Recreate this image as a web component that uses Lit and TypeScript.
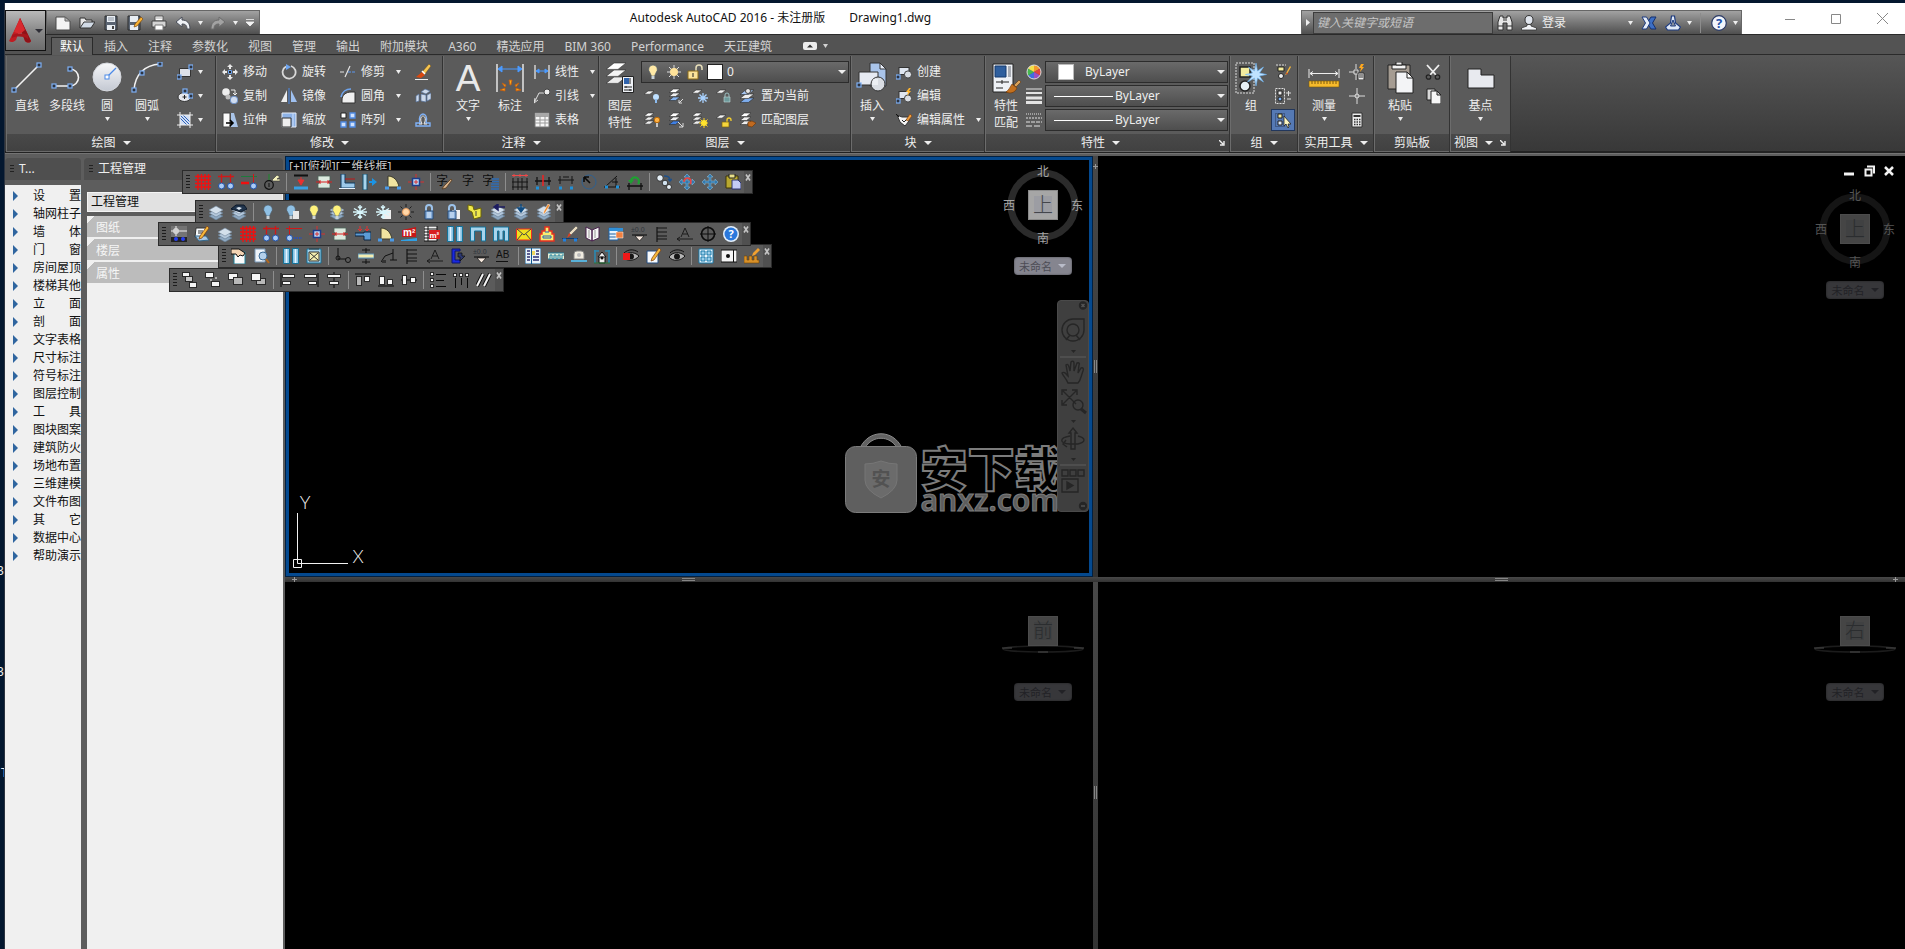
import { LitElement, html, svg, css, nothing, TemplateResult } from "lit";
import { customElement, property } from "lit/decorators.js";

/* ---------- icon library ---------- */

const node = (x: number, y: number) =>
  svg`<rect x=${x - 2} y=${y - 2} width="4" height="4" fill="#2c3340" stroke="#7db0f5" stroke-width="1.2"/>`;
const sheet = (x: number, y: number, w: number, fill: string) =>
  svg`<path d=${`M${x + w * 0.4} ${y}h${w * 0.6}l${-w * 0.4} ${w * 0.32}h${-w * 0.6}z`} fill=${fill} stroke="#2b2b2b" stroke-width=".6"/>`;
const stack = svg`<path d="M1 12l7-3 7 3-7 4z" fill="#8fa9c2" stroke="#5f7890" stroke-width=".6"/><path d="M1 9l7-3 7 3-7 4z" fill="#b4c8dc" stroke="#5f7890" stroke-width=".6"/><path d="M1 6l7-4 7 4-7 4z" fill="#d3e0ec" stroke="#71869c" stroke-width=".6"/>`;
const lens = (x: number, y: number) => svg`<circle cx=${x} cy=${y} r="3" fill="#a9cbf5" stroke="#1f50a8"/>`;
const walls = svg`<path d="M.5.5h6v15h-6zM9.500.5h6v15h-6z" fill="#8cc4e4" stroke="#14739a"/><path d="M3.500 1v14M12.500 1v14" stroke="#e4f4ff" stroke-width="1.500"/>`;
const door = svg`<path d="M3 13V2c6 0 10 5 11 11z" fill="#efe3a0" stroke="#3a3a2c"/><path d="M0 14h4M12 14h4" stroke="#4a9ae8" stroke-width="3"/>`;
const flake = svg`<path d="M8 1v14M2 4.500l12 7M14 4.500l-12 7M6 2.500l2 2 2-2M6 13.500l2-2 2 2M1 8h14" stroke="#d8f6fc" stroke-width="1.400" fill="none"/>`;
const bulb = (c: string) =>
  svg`<path d="M8 1a4.500 4.500 0 0 1 3 7.700L9.500 12h-3L5 8.700A4.500 4.500 0 0 1 8 1z" fill=${c} stroke="#51606d" stroke-width=".6"/><path d="M6.500 12h3v3h-3z" fill="#c9d2d8"/>`;
const paper = svg`<path d="M8 6h8v9H8z" fill="#fff" opacity=".9"/>`;
const lockIce = svg`<path d="M5 8V4a3 3 0 0 1 6 0v4" fill="none" stroke="#9cc2ea" stroke-width="2"/><path d="M4 7h8v8H4z" fill="#87aedb" stroke="#284c78"/><path d="M6 9h4M6 11h4M6 13h4" stroke="#e8f4ff"/>`;
const box = (x: number, y: number, w = 7, h = 4, f = "#f4f4f4") =>
  svg`<rect x=${x + 0.5} y=${y + 0.5} width=${w} height=${h} fill=${f} stroke="#2a2a2a"/>`;
const blockShape = svg`<rect x="3" y="3.500" width="10" height="7" fill="#dfe6f0" stroke="#333"/><circle cx="12" cy="10.500" r="3.600" fill="#d9dde3" stroke="#444"/>`;
const hanzi = (x: number) =>
  svg`<text x=${x} y="11" font-size="12" fill="#0d0d0d" font-family="Noto Sans CJK SC">字</text>`;
const gridRed = svg`<path d="M3 0v16M6.500 0v16M10 0v16M13.500 0v16M0 2.500h16M0 6h16M0 9.500h16M0 13h16" stroke="#f01010" stroke-width="1.400"/>`;
const axisRed = svg`<path d="M0 2.500h16M3.500 0v9M12.500 0v9" stroke="#d01818" stroke-width="1.300"/>${lens(3.5, 12)}${lens(12.5, 12)}`;
const column = svg`<path d="M8 0v16M0 8h16" stroke="#d83030"/><rect x="4.500" y="4.500" width="7" height="7" fill="#b9d4f4" stroke="#1c3d8c" stroke-width="1.500"/><path d="M8 6v4M6 8h4" stroke="#d83030"/>`;
const wallSlice = svg`<path d="M2 2h12v4l-2 2 2 2v4H2v-4l2-2-2-2z" fill="#dceadf" stroke="#4c6658" stroke-width=".8"/><path d="M0 8h16M4 6v4M12 6v4" stroke="#d82020"/>`;
const cross4 = svg`<path d="M8 0l3 3H9v4h4V5l3 3-3 3V9H9v4h2l-3 3-3-3h2V9H3v2L0 8l3-3v2h4V3H5z" fill="#3479ad" stroke="#8cc4e4" stroke-width=".5"/>`;
const levelMark = svg`<text x="0" y="6" font-size="7" fill="#30363c" font-family="Liberation Sans">±0.0</text><path d="M1 9h15" stroke="#0b0b0b"/><path d="M4 10h9l-4.500 5z" fill="#f6e9df" stroke="#111" stroke-width=".7"/>`;
const comb = svg`<path d="M3 1v15M3 2h10M3 6h10M3 10h10M3 13h10" stroke="#141414" fill="none" stroke-width="1.200"/>`;
const compassA = svg`<path d="M0 13h16M0 13l3-2M0 13l3 2M4 11L8 2l4 9M6 8h5" stroke="#1c1c1c" fill="none"/>`;
const eye = svg`<path d="M0 9c3-5 11-6 16-1-4 5-12 6-16 1z" fill="#b4b4b4" stroke="#111"/><circle cx="8" cy="8.500" r="3" fill="#161616"/><path d="M1 5c4-4 10-4 14-1" stroke="#111" fill="none"/>`;
const pencil = svg`<path d="M13 0l2 2-7 10-3 1 1-3z" fill="#f5b73a" stroke="#7a3c10" stroke-width=".7"/>`;

const icons: Record<string, TemplateResult> = {
  /* quick access */
  new: svg`<path d="M1 2h9l5 4v9H1z" fill="#f3f3f3" stroke="#4a4a4a"/><path d="M10 2v4h5z" fill="#b9b9b9" stroke="#666"/>`,
  open: svg`<path d="M1 13V3h5l1 2h6v2" fill="#e8e8e8" stroke="#333"/><path d="M1 13l4-6h11l-4 6z" fill="#d2dbe6" stroke="#333"/>`,
  save: svg`<path d="M2 1h12v14H2z" fill="#5a6472" stroke="#2c2c2c"/><path d="M4 1h8v6H4zM4 10h8v5H4z" fill="#e9eef3"/><path d="M5 3h6M5 5h6" stroke="#8a93a0"/><path d="M9 11h2v3H9z" fill="#444"/>`,
  saveas: svg`<path d="M1 1h12v14H1z" fill="#5a6472" stroke="#2c2c2c"/><path d="M3 1h8v6H3zM3 10h8v5H3z" fill="#e9eef3"/><path d="M14 2l2 2-6 7-3 1 1-3z" fill="#f9b233" stroke="#7c4a10" stroke-width=".7"/>`,
  print: svg`<path d="M4 1h8v5H4z" fill="#fff" stroke="#555"/><path d="M1 6h14v6H1z" fill="#d4d4d4" stroke="#444"/><path d="M4 10h8v5H4z" fill="#fff" stroke="#777"/><path d="M5 3h6" stroke="#aaa"/>`,
  undo: svg`<path d="M7 2v3c5 0 8 3 8 9h-3c0-4-2-5-5-5v3L1 7z" fill="#eef1f6" stroke="#4a4f5a"/>`,
  redo: svg`<path d="M9 2v3c-5 0-8 3-8 9h3c0-4 2-5 5-5v3l6-5z" fill="#a2a2a2" stroke="#6c6c6c"/>`,
  /* info centre */
  find: svg`<path d="M3 1h3v2h4V1h3l2 6v8h-5V8H6v7H1V7z" fill="#e7e7e7" stroke="#333"/><path d="M1 11h5M10 11h5M6 5h4" stroke="#333"/>`,
  user: svg`<path d="M8 .5c3 0 4 2 4 4.500S10.500 9.500 8 9.500 4 7.500 4 5 5 .5 8 .5z" fill="#dfe4ec" stroke="#333"/><path d="M6 9.500h4v1.500l5.500 2v2H.5v-2L6 11z" fill="#f1f3f7" stroke="#333" stroke-width=".8"/>`,
  exchange: svg`<path d="M15 2h-5L6 8l4 6h5l-3.500-6z" fill="#3d6fc4" stroke="#15306e"/><path d="M1 2h4.500L9 8l-3.500 6H1l3.500-6z" fill="#e6edf8" stroke="#1d3b80"/>`,
  a360: svg`<path d="M6.500 1h3l1 7 5 4-2 3h-11l-2-3 5-4z" fill="#dfe8f6" stroke="#1d3b80" stroke-width="1.200"/><path d="M8 5l2.500 6h-5z" fill="#8a8f98" stroke="#1d3b80"/>`,
  help: svg`<circle cx="8" cy="8" r="7.300" fill="#f2f5fb" stroke="#2a3a66" stroke-width="1.200"/><text x="8" y="13" text-anchor="middle" font-size="13" font-weight="700" fill="#2350a8" font-family="Open Sans">?</text>`,
  /* draw */
  line: svg`<path d="M3 28L28 3" stroke="#f2f2f2" stroke-width="1.600"/>${node(3, 28)}${node(28, 3)}`,
  pline: svg`<path d="M3 24h16a8.500 8.500 0 0 0 0-17" fill="none" stroke="#f2f2f2" stroke-width="1.600"/>${node(3, 24)}${node(19, 24)}${node(19, 7)}`,
  circle: svg`<circle cx="16" cy="15" r="14" fill="url(#ball)" stroke="#d5d8de"/><path d="M16 15l9-9" stroke="#4b8ae8" stroke-width="1.300"/><rect x="14" y="13" width="4" height="4" fill="#fff" stroke="#4b8ae8"/>`,
  arc: svg`<path d="M3 28C4 13 13 3 29 2" fill="none" stroke="#f2f2f2" stroke-width="1.600"/>${node(3, 28)}${node(11, 11)}${node(29, 2)}`,
  rect: svg`<path d="M2.500 4.500h11v8h-11z" fill="#dde1e9" stroke="#333"/>${node(14, 3)}${node(2, 13)}`,
  ellipse: svg`<ellipse cx="7.500" cy="9" rx="6.500" ry="4.500" fill="#e5e7ec" stroke="#333"/><path d="M5.500 9h4M7.500 7v4" stroke="#222"/>${node(8, 3)}${node(14, 8)}`,
  hatch: svg`<path d="M3 3h10v10H3z" fill="#cfdcf2"/><path d="M3 6l7 7M3 3l10 10M6 3l7 7" stroke="#2d62b8"/><path d="M0 3h16M0 13h16M3 0v16M13 0v16" stroke="#f0f0f0"/>`,
  /* modify */
  move: svg`<path d="M8 0l3 3H9v2H7V3H5zM8 16l3-3H9v-2H7v2H5zM0 8l3-3v2h2v2H3v2zM16 8l-3-3v2h-2v2h2v2z" fill="#e9e9e9"/><path d="M6.500 6.500h3v3h-3z" fill="#222" stroke="#6ea5f0"/>`,
  copy: svg`<circle cx="4" cy="4" r="3.800" fill="#eee"/><circle cx="6" cy="9" r="2.500" fill="#bbb"/><circle cx="12" cy="12" r="3.800" fill="#cfdcf0" stroke="#6b8fc6"/><path d="M9 2h4v4M11 5l2 2 2-2" stroke="#eee" fill="none"/>`,
  stretch: svg`<path d="M1 1h7v14H1z" fill="#fafafa" stroke="#444"/><path d="M9 1h3l4 14H9z" fill="#a9c4e8"/><path d="M4 11h7M8 8l3 3-3 3" stroke="#000" fill="none" stroke-width="1.600"/>`,
  rotate: svg`<path d="M10 2a6.500 6.500 0 1 1-5 .5" fill="none" stroke="#d9d9d9" stroke-width="1.800"/><path d="M5 0l5 3-5 3z" fill="#6ea5f0"/>`,
  mirror: svg`<path d="M6 2v12H0z" fill="#efefef"/><path d="M10 2v12h6z" fill="#9fc0ef"/><path d="M8 0v16" stroke="#4b8ae8"/>`,
  scale: svg`<path d="M1 1h14v14H1z" fill="#8db2e6" stroke="#e8eef8"/><path d="M1 6h9v9H1z" fill="#eee" stroke="#333"/><path d="M12 1v14" stroke="#cfe0fa"/>`,
  trim: svg`<path d="M0 8h4M5 13l5-11" stroke="#e4e4e4" stroke-width="1.200"/><path d="M8 8h8" stroke="#5c98ef" stroke-dasharray="3 1"/>`,
  fillet: svg`<path d="M2 15V12C2 7 6 4 11 4h4v11z" fill="#f0f0f0" stroke="#333"/><path d="M1 9C2 4 6 1 11 1" fill="none" stroke="#6ea5f0" stroke-width="1.600"/>`,
  array: svg`<path d="M1 1h5v5H1z" fill="#fff" stroke="#222"/><path d="M10 1h5v5h-5zM1 10h5v5H1zM10 10h5v5h-5z" fill="#cfe0fb" stroke="#4f8ae4" stroke-width="1.300"/>`,
  erase: svg`<path d="M0 15.500h13" stroke="#eee"/><path d="M14 0l2 2-6 8-3-2z" fill="#f6c651" stroke="#6c4816" stroke-width=".5"/><path d="M7 8l3 3-4 3-5-1z" fill="#d9480f"/><path d="M7 7l3 3" stroke="#fff" stroke-width="1.500"/>`,
  explode: svg`<path d="M6 4l4-3 5 2-4 3zM1 8l3-2v7l-3 1zM6 6l5 1v7l-5-1zM12 7l4-2v6l-4 2z" fill="#cdd9ea" stroke="#55719b" stroke-width=".7"/>`,
  offset: svg`<path d="M1 14h14v-3h-4c2-6-1-9-3-9s-5 3-3 9H1z" fill="none" stroke="#7fb1f7" stroke-width="1.400"/><path d="M4 12h3c-3-6 0-8 1-8s4 2 1 8h3" fill="none" stroke="#eee"/>`,
  /* annotate */
  bigA: svg`<text x="16" y="29" text-anchor="middle" font-size="37" fill="#e9e9e9" font-family="Liberation Sans">A</text>`,
  dim: svg`<path d="M3 2v28M29 2v28" stroke="#eee" stroke-width="1.400"/><path d="M4 7h24M4 7l4-3v6zM28 7l-4-3v6z" stroke="#4b9aff" fill="#4b9aff"/><path d="M15 18h3l-1 5h-1zM8 21l4 2-1 2zM25 21l-4 2 1 2zM6 28l5-2v3zM27 28l-5-2v3z" fill="#f7a81c" stroke="#c65a0c" stroke-width=".8"/>`,
  linear: svg`<path d="M1 1v14M15 1v14" stroke="#eee" stroke-width="1.200"/><path d="M2 7h12M2 7l3-2v4zM14 7l-3-2v4z" stroke="#4b9aff" fill="#4b9aff"/>`,
  leader: svg`<path d="M0 15l2-4 3-6h6M0 15l1-5M0 15l4-3" fill="none" stroke="#e0e0e0"/><circle cx="13" cy="4" r="3" fill="#eee" stroke="#444"/>`,
  table: svg`<path d="M1 1h14v14H1z" fill="#f7f7f7" stroke="#777"/><path d="M1 1h14v4H1z" fill="#a8a8a8"/><path d="M1 8h14M1 11h14M6 4v11M11 4v11" stroke="#999"/>`,
  /* layers */
  layerprop: svg`${sheet(2, 15, 20, "#ececec")}${sheet(2, 8, 20, "#f4f4f4")}${sheet(2, 1, 20, "#fff")}<path d="M18.500 14.500h11v16h-11z" fill="#eef1f6" stroke="#222"/><path d="M20 16h5v6h-5z" fill="#2f63ad"/><path d="M26 16v6M20 25h8M20 28h8M22 24v2M26 27v2" stroke="#222"/>`,
  bulb: bulb("#ffe9a6"),
  sun: svg`<path d="M8 1v14M1 8h14M3 3l10 10M13 3L3 13" stroke="#ddd"/><circle cx="8" cy="8" r="4" fill="#ffe39a"/>`,
  unlock: svg`<path d="M9 8V4a3 3 0 0 1 6 0v2" fill="none" stroke="#e8dfba" stroke-width="1.500"/><path d="M1 7h10v8H1z" fill="#fbe39a" stroke="#8b6a18"/><path d="M6 9v4" stroke="#222"/>`,
  l1: svg`${sheet(0, 3, 10, "#f3f3f3")}<circle cx="12" cy="9" r="3" fill="#bfe0ff"/><path d="M12 11v4" stroke="#8dbcf0" stroke-width="2"/>`,
  l2: svg`${sheet(1, 9, 11, "#86b4f0")}${sheet(1, 5, 11, "#eee")}${sheet(1, 1, 11, "#fff")}<path d="M15 11l-4 4M11 12v3h3" stroke="#ddd" fill="none"/>`,
  l3: svg`${sheet(0, 2, 10, "#f3f3f3")}<path d="M11 5v10M6 10h10M7.500 6.500l7 7M14.500 6.500l-7 7" stroke="#a9d2ff" stroke-width="1.300"/>`,
  l4: svg`${sheet(0, 2, 10, "#f3f3f3")}<path d="M9 9V7a2 2 0 0 1 4 0v2" fill="none" stroke="#9bbfc0"/><path d="M8 9h6v5H8z" fill="#6e9b9c" stroke="#bfd6d6" stroke-width=".6"/>`,
  l5: svg`${sheet(0, 10, 14, "#7dacec")}${sheet(0, 6, 14, "#eee")}${sheet(0, 2, 14, "#a9c9f4")}<circle cx="8" cy="3" r="2.500" fill="#e8e8e8" stroke="#444"/>`,
  l6: svg`${sheet(0, 9, 10, "#eee")}${sheet(0, 5, 10, "#eee")}${sheet(0, 1, 10, "#fff")}<circle cx="13" cy="8" r="2.700" fill="#ffb347" stroke="#b96a08"/><path d="M13 11v4" stroke="#e8e8e8" stroke-width="1.500"/>`,
  l7: svg`${sheet(1, 9, 11, "#3f7fe4")}${sheet(1, 5, 11, "#eee")}${sheet(1, 1, 11, "#fff")}<path d="M10 10l5 5M15 11v4h-4" stroke="#ddd" fill="none"/>`,
  l8: svg`${sheet(0, 9, 10, "#eee")}${sheet(0, 5, 10, "#eee")}${sheet(0, 1, 10, "#fff")}<path d="M12 6v10M7 11h10M8.500 7.500l7 7M15.500 7.500l-7 7" stroke="#ffd21f"/><circle cx="12" cy="11" r="3" fill="#ffe32d"/>`,
  l9: svg`${sheet(0, 3, 10, "#f3f3f3")}<path d="M11 10V8a2 2 0 0 1 4 0v1" fill="none" stroke="#f5cf2e" stroke-width="1.300"/><path d="M6 10h7v5H6z" fill="#f5d53c" stroke="#7c6210" stroke-width=".7"/>`,
  l10: svg`${sheet(0, 9, 11, "#eee")}${sheet(0, 5, 11, "#eee")}${sheet(0, 1, 11, "#fff")}<path d="M8 10l4-1 4 2-4 4-4-1z" fill="#c06a20" stroke="#6c3608" stroke-width=".6"/>`,
  /* block */
  insert: svg`<path d="M14 1h10l6 6v17H14z" fill="#a9c4ea" stroke="#333"/><path d="M24 1v6h6z" fill="#e8eefa" stroke="#333"/><path d="M3 10h19v13H3z" fill="#e6eaf2" stroke="#333"/><circle cx="22" cy="22" r="7" fill="#d9dde3" stroke="#333"/><path d="M17 17h5v6h-6z" fill="#f4f6fa" opacity=".7"/>${node(3, 23)}`,
  create: svg`${blockShape}${node(2, 13)}`,
  edit: svg`${blockShape}<path d="M13 0l-3 4h2l-1 4 4-5h-2l2-3z" fill="#ffb52e"/>${node(2, 13)}`,
  attr: svg`<path d="M1 3l5 2h7v4l-4 5-5-4z" fill="#f4f4f4" stroke="#333"/><path d="M6 8l2 2 4-4" stroke="#222" fill="none"/><path d="M14 2l2 2-4 5-2-1z" fill="#f0a040" stroke="#7c3a08" stroke-width=".6"/><path d="M0 2l3 3" stroke="#111"/>`,
  /* properties */
  match: svg`<path d="M3 2h20v28H3z" fill="#eef1f6" stroke="#222"/><path d="M5 4h11v11H5z" fill="#2f5f9e" stroke="#173a6c"/><path d="M18 4h3v11h-3z" fill="#a8acb4"/><path d="M6 20h13M6 26h7M12 18v4" stroke="#222"/><path d="M29 18l2 2-5 5-2-2z" fill="#d8a15a" stroke="#5c3410" stroke-width=".6"/><path d="M22 22l5 4c-2 5-7 6-11 4 3-2 4-5 6-8z" fill="#c3701e" stroke="#6c3608" stroke-width=".6"/>`,
  wheel: svg`<path d="M8 8V1a7 7 0 0 1 6 3.500z" fill="#f39a2c"/><path d="M8 8l6-3.500a7 7 0 0 1 0 7z" fill="#e2443a"/><path d="M8 8l6 3.500A7 7 0 0 1 8 15z" fill="#9a4fc4"/><path d="M8 8v7a7 7 0 0 1-6-3.500z" fill="#3d6fe0"/><path d="M8 8l-6 3.500a7 7 0 0 1 0-7z" fill="#46b84e"/><path d="M8 8L2 4.500A7 7 0 0 1 8 1z" fill="#f2e04a"/><circle cx="8" cy="8" r="7" fill="none" stroke="#ddd"/>`,
  weight: svg`<path d="M0 1h16" stroke="#e4e4e4"/><path d="M0 5h16" stroke="#e4e4e4" stroke-width="2"/><path d="M0 10h16M0 14.500h16" stroke="#e4e4e4" stroke-width="3"/>`,
  ltype: svg`<path d="M0 2h16" stroke="#e4e4e4" stroke-dasharray="1 1"/><path d="M0 6h16" stroke="#e4e4e4" stroke-dasharray="2 1"/><path d="M0 10h16" stroke="#e4e4e4" stroke-dasharray="4 1"/><path d="M0 14h16" stroke="#e4e4e4" stroke-dasharray="6 2"/>`,
  /* group */
  group: svg`<path d="M1 1h18v30H1z" fill="none" stroke="#ddd" stroke-dasharray="2 1"/><path d="M5 5h10v10H5z" fill="#f3ec9e" stroke="#222" stroke-width="1.500"/><circle cx="10" cy="24" r="5" fill="#e6f0f6" stroke="#222" stroke-width="1.500"/><path d="M21 1l1.500 8 6-4-4 6 7 1.500-7 1.500 4 6-6-4-1.500 8-1.500-8-7 4 5-6-7-1.500 7-1.500-4-6 6 4z" fill="#bfe2ff" stroke="#6cb4f4" stroke-width=".6"/>`,
  ungroup: svg`<path d="M1 1h10" stroke="#ddd" stroke-dasharray="2 1"/><path d="M3 3h6v4H3z" fill="#f3ec9e" stroke="#222"/><circle cx="6" cy="12" r="2.500" fill="#eee" stroke="#222"/><path d="M15 2l1 1-4 7-2 1z" fill="#f5b73a"/><path d="M11 9l2 1" stroke="#d23c1c"/>`,
  groupedit: svg`<path d="M.5.5h9v15h-9z" fill="none" stroke="#ddd" stroke-dasharray="2 1"/><path d="M3 3h4v4H3z" fill="#eee" stroke="#222"/><circle cx="5" cy="11" r="2" fill="#7fb0f0" stroke="#222"/><path d="M11 5h5M13.500 3v5M12 11h4" stroke="#ddd"/>`,
  groupsel: svg`<path d="M.5 1.500h9v13h-9z" fill="none" stroke="#2c3c58" stroke-dasharray="1 1"/><path d="M3 2h4v4H3z" fill="#f3ec9e" stroke="#222"/><path d="M3 9h4v4H3z" fill="#dce8f4" stroke="#222"/><path d="M9 4v10l2-2 2 4 1-1-1-3h3z" fill="#fbf6c0" stroke="#222" stroke-width=".8"/>`,
  /* utilities */
  measure: svg`<path d="M1 7v9M31 7v9M2 11.500h28M2 11.500l3-2M2 11.500l3 2M30 11.500l-3-2M30 11.500l-3 2" stroke="#eee" fill="none"/><path d="M1 19h30v6H1z" fill="#f7bb2c" stroke="#7c5a0c" stroke-width=".6"/><path d="M4 19v3M7 19v3M10 19v3M13 19v3M16 19v3M19 19v3M22 19v3M25 19v3M28 19v3" stroke="#7c5a0c"/>`,
  quick: svg`<path d="M0 8h5M7 0v5M7 10v6" stroke="#ddd"/><path d="M5 6h4v4H5z" fill="none" stroke="#ddd"/><path d="M12 0l-2 4h2l-1 4 4-5h-2l2-3z" fill="#ffa81e"/><path d="M9 9h6v7H9z" fill="#eee" stroke="#333"/><path d="M10 11h4M10 13h4" stroke="#333"/>`,
  point: svg`<path d="M0 8h16M8 0v16" stroke="#ddd"/><circle cx="8" cy="8" r="2" fill="#888" stroke="#ddd"/>`,
  calc: svg`<path d="M3 1h10v14H3z" fill="#eee" stroke="#333"/><path d="M4.500 3h7v2h-7z" fill="#333"/><path d="M5 7.500h1.500M7.500 7.500H9M10 7.500h1.500M5 10h1.500M7.500 10H9M10 10h1.500M5 12.500h1.500M7.500 12.500H9M10 12.500h1.500" stroke="#333" stroke-width="1.300"/>`,
  paste: svg`<path d="M4 3h22v24H4z" fill="#a59c92" stroke="#222"/><path d="M8 3h14v4H8z" fill="#f4f4f4" stroke="#222"/><path d="M12 0h6v3h-6z" fill="#eee" stroke="#222"/><path d="M12 10h11l6 6v15H12z" fill="#f3f4f6" stroke="#222"/><path d="M23 10v6h6z" fill="#fff" stroke="#222"/>`,
  cut: svg`<path d="M2 1l9 10M14 1L5 11" stroke="#f0f0f0" stroke-width="1.800"/><circle cx="3.500" cy="13" r="2.200" fill="none" stroke="#222" stroke-width="1.300"/><circle cx="12.500" cy="13" r="2.200" fill="none" stroke="#222" stroke-width="1.300"/>`,
  copyclip: svg`<path d="M2 1h8v11H2z" fill="#d9d9d9" stroke="#222"/><path d="M6 3h6l4 4v9H6z" fill="#f5f5f5" stroke="#222"/><path d="M12 3v4h4z" fill="#ccc" stroke="#222"/>`,
  base: svg`<path d="M3 7h13v6h13v13H3z" fill="#e8eaef" stroke="#222"/>`,
  /* floating toolbars */
  grid: gridRed,
  axis: axisRed,
  axis2: svg`<path d="M0 2.500h16" stroke="#1e7a3c"/><path d="M12.500 0v9" stroke="#d01818"/><path d="M0 9h8" stroke="#f01010" stroke-width="2.500"/>${lens(12.5, 12)}`,
  axis3: svg`<path d="M0 2.500h16M3.500 0v9" stroke="#d01818"/>${lens(3.5, 12)}<path d="M8 12h8" stroke="#2050d0" stroke-width="1.500" stroke-dasharray="1.500 1"/>`,
  axisno: svg`<path d="M5 0v7" stroke="#1c8a2c"/><circle cx="5" cy="11" r="4.300" fill="none" stroke="#111" stroke-width="1.200"/><path d="M5 9v4" stroke="#111"/><path d="M8 6l5-5 3 2-3 2h3v2h-7z" fill="#f3efbc" stroke="#333" stroke-width=".6"/>`,
  w1: svg`<path d="M1 1.500h14" stroke="#111" stroke-width="2"/><path d="M1 14h14" stroke="#38a0e4" stroke-width="3"/><path d="M8 3v6M5 6l3 5 3-5z" stroke="#e83030" fill="#e83030"/>`,
  w2: wallSlice,
  w3: svg`<path d="M2 0h4v9h10v5H2z" fill="#9cc8e8" stroke="#103c60"/><path d="M6 5h10" stroke="#c01818"/><path d="M0 14.500h16" stroke="#e8f4ff"/>`,
  w4: svg`<path d="M1 0h4v16H1z" fill="#a8d4ec" stroke="#14506e"/><path d="M7 7h3V4l5 4-5 4V9H7z" fill="#1c94e4"/>`,
  door,
  column,
  t1: svg`${hanzi(-1)}<path d="M15 6l-6 8-4 1 2-3 7-7z" fill="#d9b48c" stroke="#503010" stroke-width=".7"/>`,
  t2: hanzi(2),
  t3: svg`${hanzi(-1)}<path d="M9 5h7M9 7.500h7M8 10h8M8 12.500h8M8 15h8" stroke="#2f6cb4" stroke-width="1.500"/>`,
  d1: svg`<path d="M1 4v12M6 4v12M10 4v12M15 4v12M0 13h16M0 8h16" stroke="#151515"/><path d="M0 1.500h16M2 0v3M8 0v3M14 0v3" stroke="#f04848"/>`,
  d2: svg`<path d="M0 7h16M2 3v8M14 3v8" stroke="#151515" stroke-width="1.300"/><path d="M8 1v11" stroke="#f02020" stroke-width="1.500"/><path d="M1 14h3M12 14h3" stroke="#2090d8" stroke-width="3"/>`,
  d3: svg`<path d="M0 6h16M2 2v8M14 2v8M5 3h6" stroke="#151515"/><path d="M1 14h3M12 14h3" stroke="#2090d8" stroke-width="3"/>`,
  d4: svg`<circle cx="8" cy="8" r="7" fill="none" stroke="#2e6090"/><path d="M9 9L3 3M3 3h5M3 3v5" stroke="#0a0a0a" stroke-width="1.600"/>`,
  d5: svg`<path d="M0 13h16M1 13L13 2M8 8h6M12 4v9" stroke="#111" fill="none"/><path d="M1 13h3M12 13h3" stroke="#2090d8" stroke-width="3"/>`,
  d6: svg`<path d="M0 12h16M2 9v7M14 9v7" stroke="#111" stroke-width="1.300"/><path d="M4 8a4 4 0 1 1 7 2" fill="none" stroke="#1fa032" stroke-width="2.200"/><path d="M1 6h6l-3 4z" fill="#1fa032"/>`,
  c1: svg`<circle cx="4" cy="4" r="3.300" fill="#e4eef6" stroke="#333"/><circle cx="9" cy="9" r="2.800" fill="#cfe0ee" stroke="#333"/><circle cx="13" cy="13" r="2.500" fill="#e4eef6" stroke="#333"/><path d="M8 2c4 0 6 1 6 4M12 5l2 2 2-2" stroke="#1f5088" stroke-width="1.500" fill="none"/>`,
  c2: svg`${cross4}<path d="M5 8a3.500 3.500 0 1 1 6 2" fill="none" stroke="#f04040" stroke-width="1.500"/>`,
  c3: cross4,
  c4: svg`<path d="M1 2h12v12H1z" fill="#b8a830" stroke="#3c3408"/><path d="M4 0h6v4H4z" fill="#e8e08c" stroke="#222"/><path d="M7 6h6l3 3v6H7z" fill="#c4ccf4" stroke="#2c3470"/>`,
  stack,
  stack2: svg`${stack}<path d="M0 5l5-4h8l3 4-6 3z" fill="#20344c" stroke="#0c1828"/><path d="M5 4l3-1 3 1-3 2z" fill="#dfeaf4"/>`,
  b1: bulb("#8fc0e4"),
  b2: svg`${bulb("#8fc0e4")}<path d="M10 7h6v8h-6z" fill="#e8e8e8"/>`,
  b3: bulb("#fff27c"),
  b4: svg`${stack}${bulb("#fff27c")}`,
  f1: flake,
  f2: svg`${paper}${flake}`,
  f3: svg`<circle cx="8" cy="8" r="3.500" fill="#ffd7a8" stroke="#f0a060"/><path d="M8 0v3M8 13v3M0 8h3M13 8h3M2.500 2.500l2 2M11.500 11.500l2 2M13.500 2.500l-2 2M2.500 13.500l2-2" stroke="#1c1c1c"/>`,
  k1: lockIce,
  k2: svg`${paper}${lockIce}`,
  k3: svg`<path d="M1 1l5 1 1 4 7-2v9l-7 2-2-7-4-2z" fill="#efe84c" stroke="#6c6408"/><path d="M9 7v5" stroke="#444"/>`,
  s1: svg`${stack}<path d="M15 3H6M8 0L4 3l4 3z" stroke="#1c1c60" fill="#1c1c60" stroke-width="1.500"/>`,
  s2: svg`${stack}<path d="M8 0v5M5 4l3 4 3-4z" stroke="#124c80" fill="#124c80" stroke-width="1.500"/>`,
  s3: svg`${stack}<path d="M12 0l2 1-5 8-2 1 1-3z" fill="#f08a2c" stroke="#fff" stroke-width=".5"/>`,
  p1: svg`<rect width="16" height="16" fill="#747474"/><path d="M5 0v10M0 5h16M3 3h4v4H3z" stroke="#f0f0f0" fill="none"/><path d="M0 11h16v5H0z" fill="#222"/><circle cx="5" cy="13" r="2" fill="#2840f0"/><circle cx="12" cy="13" r="2" fill="#2840f0"/>`,
  p2: svg`<path d="M2 2h10l-2 9H1z" fill="#f4f8fa" stroke="#333"/><path d="M1 10l4 5 10-1-3-4z" fill="#a9c8e4" stroke="#35688c"/><path d="M4 5h5M4 7h5" stroke="#333"/>${pencil}`,
  r1: svg`<path d="M0 7h9v-1h7v8H9v-4H0z" fill="#5c9cd4" stroke="#0c2440"/><path d="M5 0v4M12 0v4M3 3l2 2 2-2M10 3l2 2 2-2" stroke="#e83030" fill="none"/>`,
  r2: svg`<path d="M1 4l14-3v10H1z" fill="#c81818"/><path d="M0 14l16-2v3H0z" fill="#30a0e4"/><text x="2" y="10" font-size="10" font-weight="700" fill="#fff" font-family="Liberation Sans">m²</text>`,
  r3: svg`<path d="M0 0h13v15H0z" fill="#f4f4f4" stroke="#111"/><path d="M0 3h13M0 6h13M0 9h13M0 12h13M4 0v15" stroke="#111"/><path d="M5 4h11v9H5z" fill="#d82020"/><text x="5.500" y="11.500" font-size="8" font-weight="700" fill="#fff" font-family="Liberation Sans">m²</text>`,
  walls,
  g1: svg`<path d="M.5 1h15v14h-4V5h-7v10h-4z" fill="#a8d4ec" stroke="#14739a"/>`,
  g2: svg`<path d="M.5 1h15v14h-4V5H10v9H6V5H4.500v10h-4z" fill="#a8d4ec" stroke="#14739a"/>`,
  m1: svg`<path d="M.5 3h15v11H.5z" fill="#f0e020" stroke="#f03020"/><path d="M1 3l7 6 7-6M1 14l5-6M15 14l-5-6" stroke="#444" fill="none"/>`,
  m2: svg`<path d="M6 1h4v4h3v3h2v7H1V8h2V5h3z" fill="#f8ec70" stroke="#e83020" stroke-width="1.400"/><path d="M4 10h8v2H4zM6 6h4" fill="none" stroke="#2060b8"/>`,
  m3: svg`<path d="M14 0l2 2-7 7-2-2z" fill="#e8dcc0" stroke="#555" stroke-width=".6"/><path d="M7 7l2 2-4 3z" fill="#e04020"/><path d="M0 12.500h16" stroke="#123c70"/><path d="M1 14h3M12 14h3" stroke="#2080e0" stroke-width="3"/>`,
  m4: svg`<path d="M1 1l6 3v11l-6-3zM14 1L7 4v11l7-3z" fill="#f7f7f7" stroke="#48204c"/><path d="M10 4v8M4 4v8" stroke="#999"/>`,
  m5: svg`<path d="M1 2h9v12H1z" fill="#e8f4fc" stroke="#2060a0"/><path d="M1 2h14v3H1z" fill="#3090d8"/><path d="M1 8h9M1 11h9" stroke="#2060a0"/><path d="M8 6h7v6H8z" fill="#f08040" stroke="#fff" stroke-width=".5"/>`,
  level: levelMark,
  comb,
  compassA,
  north: svg`<circle cx="8" cy="8" r="6.500" fill="none" stroke="#0c0c0c" stroke-width="1.600"/><path d="M0 8h16M8 0v16" stroke="#0c0c0c"/>`,
  ask: svg`<circle cx="8" cy="8" r="8" fill="#e4f0fc"/><circle cx="8" cy="8" r="6.500" fill="#2a78dc"/><text x="8" y="12" text-anchor="middle" font-size="11" font-weight="700" fill="#fff" font-family="Open Sans">?</text>`,
  h1: svg`<path d="M3 4h11v12H3z" fill="#fbfbfb" stroke="#208098"/><path d="M0 1h8l6 4-2 3-3-1-2 2-2-3H0z" fill="#f3d4b4" stroke="#111"/>`,
  h2: svg`<path d="M1 1h10v13H1z" fill="#eef4fa" stroke="#7898b8"/><circle cx="9" cy="8" r="4" fill="#b4d0ea" stroke="#3c6c98"/><path d="M12 11l3 4" stroke="#b06820" stroke-width="2"/>`,
  h3: svg`<path d="M1 1h14v14H1z" fill="#a8d4ec" stroke="#14739a"/><path d="M3 4h10v9H3z" fill="#f3eeb0" stroke="#333"/><path d="M4 5l8 7M12 5l-8 7M3 1h10" stroke="#333"/>`,
  e1: svg`<path d="M3 0v11h8" stroke="#111" fill="none"/><circle cx="3" cy="10" r="2" fill="none" stroke="#111"/><circle cx="13" cy="12" r="2.500" fill="none" stroke="#111"/>`,
  e2: svg`<path d="M0 6h16v4H0z" fill="#f3ecb0" stroke="#5c98c0"/><path d="M8 0v5M8 11v5M4 2h8M4 14h8" stroke="#111" fill="none"/>`,
  e3: svg`<path d="M0 14l4-6 8-3V1M12 5v7M2 13h3M9 12h7" stroke="#111" fill="none"/><path d="M1 12h4v3H1z" fill="#333"/>`,
  e4: svg`<path d="M2 1h8v2H5v9h5v3H2z" fill="#1828e0" stroke="#0c1470"/><path d="M8 5h4v3h3l-5 5V9H8z" fill="#2c3870" stroke="#0a0a0a" stroke-width=".7"/>`,
  ab: svg`<text x="0" y="10" font-size="10" fill="#101010" font-family="Liberation Sans">AB</text><path d="M0 13.500h12" stroke="#111"/>`,
  i1: svg`<path d="M0 0h16v16H0z" fill="#eaf4fa" stroke="#105890"/><path d="M2 3h3M2 6h3M2 9h3M2 12h3M11 3h3M11 6h3M8 9h6M8 12h6" stroke="#2c2c70" stroke-width="1.500"/><path d="M6.500 0v16" stroke="#105890"/><path d="M7 3h3v4H7z" fill="#f0d860"/>`,
  i2: svg`<path d="M0 5h16v6H0z" fill="#e8f0d8"/><path d="M0 5h16M0 11h2V7h2v4h2V7h2v4h2V7h2v4h2V7h2" stroke="#2080a0" fill="none"/>`,
  i3: svg`<path d="M3 11V6a3 3 0 0 1 3-3h4a3 3 0 0 1 3 3v5z" fill="#f0ece0" stroke="#888"/><circle cx="8" cy="7" r="2" fill="#bbb"/><path d="M0 13h16" stroke="#58b0d8" stroke-width="2"/>`,
  i4: svg`<path d="M1 15V2M15 15V2M0 3h5M11 3h5" stroke="#2c88b0" stroke-width="1.600"/><path d="M4 9l4-5 4 5M5 15V9h6v6z" fill="#eee" stroke="#0c0c0c"/><circle cx="8" cy="10" r="1.500" fill="#111"/><path d="M0 15h16" stroke="#287838"/>`,
  eye1: svg`${eye}<path d="M0 5h7v7H0z" fill="#f01818"/>`,
  note: svg`<path d="M1 3h11v12H1z" fill="#f8fafc" stroke="#244c80"/>${pencil}`,
  eye2: eye,
  j1: svg`<path d="M1 1h14v14H1z" fill="#e8f4fc" stroke="#1878a8"/><path d="M3 3h4v4H3zM9 3h4v4H9zM3 9h4v4H3zM9 9h4v4H9z" fill="#9cd0ec" stroke="#1878a8"/>`,
  j2: svg`<path d="M0 2h16v12H0z" fill="#f6f6f6" stroke="#111"/><path d="M12.500 2v12" stroke="#111"/><circle cx="7" cy="8" r="2" fill="#111"/>`,
  j3: svg`<path d="M0 15V8h3v4h2V8h3v4h2V8h3v4h2v3z" fill="#d89028" stroke="#704404" stroke-width=".6"/><path d="M14 0l2 2-5 5-3 1 1-3z" fill="#f0a030"/>`,
  q1: svg`${box(0, 0)}${box(3, 4, 7, 5, "#c8c8c8")}${box(7, 10, 7, 5)}`,
  q2: svg`${box(0, 0, 8, 5)}${box(6, 9, 8, 5)}<path d="M5 8h2M11 5v2" stroke="#fff"/>`,
  q3: svg`${box(0, 1, 9, 6)}${box(5, 5, 9, 7, "#b8b8b8")}`,
  q4: svg`${box(5, 6, 9, 6, "#b8b8b8")}${box(0, 1, 9, 7)}`,
  a1: svg`<path d="M1 1v14" stroke="#0a0a0a"/>${box(2, 2, 12, 3)}${box(2, 9, 8, 3)}`,
  a2: svg`<path d="M15 1v14" stroke="#0a0a0a"/>${box(1, 2, 12, 3)}${box(5, 9, 8, 3)}`,
  a3: svg`<path d="M8 0v16" stroke="#0a0a0a"/>${box(1, 2, 13, 3)}${box(3, 9, 9, 3)}`,
  a4: svg`<path d="M0 2h16" stroke="#0a0a0a"/>${box(1, 4, 5, 9, "#b8b8b8")}${box(9, 4, 5, 5)}`,
  a5: svg`<path d="M0 14h16" stroke="#0a0a0a"/>${box(1, 4, 5, 8)}${box(9, 7, 5, 5)}`,
  a6: svg`<path d="M0 8h16" stroke="#0a0a0a"/>${box(1, 3, 4, 9)}${box(9, 5, 5, 5)}`,
  a7: svg`${box(0, 0, 3, 3)}${box(0, 6, 3, 3)}${box(0, 12, 3, 3)}<path d="M6 2.500h10M6 8.500h8M6 14.500h10" stroke="#0a0a0a"/>`,
  a8: svg`${box(0, 1, 3, 3)}${box(6, 1, 3, 3)}${box(12, 1, 3, 3)}<path d="M2.500 6v10M8.500 6v7M14.500 6v10" stroke="#0a0a0a"/>`,
  a9: svg`<path d="M7 2L1 14M14 2L8 14" stroke="#111" stroke-width="4"/><path d="M7 2L1 14M14 2L8 14" stroke="#f4f4f4" stroke-width="2"/>`,
};

const icon = (name: string, size = 16) => html`<svg
  class="ico"
  width=${size}
  height=${size}
  viewBox=${size > 16 ? "0 0 32 32" : "0 0 16 16"}
  aria-hidden="true"
>
  <defs>
    <linearGradient id="ball" x1="0" y1="0" x2="0" y2="1">
      <stop offset="0" stop-color="#f7f8fa" />
      <stop offset="1" stop-color="#c3c8d2" />
    </linearGradient>
  </defs>
  ${icons[name]}
</svg>`;

const caret = (w = 5) =>
  html`<svg class="caret" width=${w} height="4" viewBox="0 0 8 5" preserveAspectRatio="none" aria-hidden="true"><path d="M0 0h8L4 5z" fill="currentColor" /></svg>`;

const base = css`
  * {
    box-sizing: border-box;
  }
  button,
  select,
  input {
    font: inherit;
    color: inherit;
    background: none;
    border: 0;
    padding: 0;
    margin: 0;
    border-radius: 0;
    appearance: none;
    outline: none;
  }
  svg {
    display: block;
    flex: none;
  }
`;

/* ---------- floating toolbar ---------- */

@customElement("tool-strip")
export class ToolStrip extends LitElement {
  @property() label = "";
  @property({ attribute: false }) items: string[] = [];

  static styles = [
    base,
    css`
      :host {
        display: flex;
        height: 24px;
        width: max-content;
        background: #5b5b5b;
        border: 1px solid #2b2b2b;
        box-sizing: border-box;
      }
      .grip {
        width: 4px;
        margin: 3px 1px 3px 3px;
        background: radial-gradient(circle, #1c1c1c 1px, transparent 1px) 0 0 / 2px 3px;
      }
      .tool {
        width: 23px;
        display: grid;
        place-items: center;
      }
      .sep {
        width: 6px;
        display: grid;
        place-items: center;
      }
      .sep::after {
        content: "";
        width: 1px;
        height: 18px;
        background: #8d8d8d;
      }
      .close {
        width: 8px;
        background: #505050;
        color: #c4c4c4;
        padding-top: 3px;
        display: grid;
        justify-items: center;
        align-content: start;
      }
    `,
  ];

  render() {
    return html`
      <span class="grip"></span>
      ${this.items.map((n) =>
        n === "|" ? html`<span class="sep"></span>` : html`<button class="tool" aria-label="${this.label} ${n}">${icon(n)}</button>`
      )}
      <button class="close" aria-label="关闭">
        <svg width="6" height="7" viewBox="0 0 6 7"><path d="M1 .5l4 6M5 .5l-4 6" stroke="currentColor" stroke-width="1.600" /></svg>
      </button>
    `;
  }
}

/* ---------- view cube ---------- */

@customElement("view-cube")
export class ViewCube extends LitElement {
  @property() face = "上";
  @property({ type: Boolean, reflect: true }) active = false;
  @property({ type: Boolean }) side = false;

  static styles = [
    base,
    css`
      :host {
        display: grid;
        justify-items: center;
        width: 84px;
        --ring: #151515;
        --cube: #454545;
        --inner: #404142;
        --edge: #4c4c4c;
        --glyph: #2b2d2f;
        --word: #555;
        --pill: #37373a;
        --pilltext: #222226;
      }
      :host([active]) {
        --ring: #2b2b2b;
        --cube: #a6a6a6;
        --inner: #9c9da3;
        --edge: #8a8a8a;
        --glyph: #44464c;
        --word: #a5a5a5;
        --pill: #85858f;
        --pilltext: #4c4c55;
      }
      text {
        font-family: "Noto Sans CJK SC", sans-serif;
        text-anchor: middle;
      }
      .word {
        font-size: 12px;
        fill: var(--word);
      }
      .face {
        font-size: 20px;
        font-weight: 300;
        fill: var(--glyph);
      }
      .pill {
        display: flex;
        align-items: center;
        justify-content: center;
        gap: 6px;
        margin-top: 10px;
        width: 58px;
        height: 18px;
        border-radius: 4px;
        background: var(--pill);
        box-shadow: inset 0 0 2px #0008;
        color: var(--pilltext);
        font: 11px/16px "Noto Sans CJK SC", sans-serif;
      }
      :host([active]) .caret {
        color: #b9bcc9;
      }
    `,
  ];

  render() {
    const cube = svg`<rect x="27.500" y="27.500" width="29" height="29" fill="var(--cube)" stroke="var(--edge)"/>
      <rect x="33" y="33" width="18" height="18" fill="var(--inner)"/>
      <text class="face" x="42" y="49">${this.face}</text>`;
    const top = svg`<circle cx="42" cy="42" r="32" fill="none" stroke="var(--ring)" stroke-width="7"/>
      <text class="word" x="42" y="13">北</text><text class="word" x="42" y="80">南</text>
      <text class="word" x="8" y="47">西</text><text class="word" x="76" y="47">东</text>`;
    const disc = svg`<ellipse cx="42" cy="60" rx="40" ry="3" fill="none" stroke="#1c1c1c" stroke-width="1.500"/>
      <path d="M1 59h10M73 59h10M37 63h10" stroke="#4c4c4c"/>`;
    return html`
      <svg width="84" height="84" viewBox="0 0 84 84" role="img" aria-label=${this.face}>
        ${this.side ? disc : top}${cube}
      </svg>
      <button class="pill">未命名 ${caret(8)}</button>
    `;
  }
}

/* ---------- application ---------- */

const tabs = ["默认", "插入", "注释", "参数化", "视图", "管理", "输出", "附加模块", "A360", "精选应用", "BIM 360", "Performance", "天正建筑"];
const tree = ["设　　置", "轴网柱子", "墙　　体", "门　　窗", "房间屋顶", "楼梯其他", "立　　面", "剖　　面", "文字表格", "尺寸标注", "符号标注", "图层控制", "工　　具", "图块图案", "建筑防火", "场地布置", "三维建模", "文件布图", "其　　它", "数据中心", "帮助演示"];

const strips = {
  one: "grid axis axis2 axisno | w1 w2 w3 w4 door column | t1 t2 t3 | d1 d2 d3 d4 d5 d6 | c1 c2 c3 c4",
  two: "stack stack2 | b1 b2 b3 b4 f1 f2 f3 k1 k2 k3 s1 s2 s3",
  three: "p1 p2 stack grid axis axis3 column w2 r1 door r2 r3 walls g1 g2 m1 m2 m3 m4 m5 level comb compassA north ask",
  four: "h1 h2 | walls h3 | e1 e2 e3 comb compassA e4 level ab | i1 i2 i3 i4 | eye1 note eye2 | j1 j2 j3",
  five: "q1 q2 q3 q4 | a1 a2 a3 | a4 a5 a6 | a7 a8 a9",
};

const big = (name: string, label: string | string[], arrow = false) => html`<button class="big">
  ${icon(name, 32)}
  <span class="big-label">${(Array.isArray(label) ? label : [label]).map((l) => html`<span>${l}</span>`)}</span>
  ${arrow ? caret() : nothing}
</button>`;

const small = (name: string, label = "", arrow = false) => html`<button class="small" aria-label=${label || name}>
  ${icon(name)}${label ? html`<span>${label}</span>` : nothing}${arrow ? html`<i class="gap"></i>${caret()}` : nothing}
</button>`;

const panel = (cls: string, title: string, body: unknown, arrow = true, launcher = false) => html`<section class="panel ${cls}">
  <div class="body">${body}</div>
  <div class="foot">
    <button class="foot-title">${title}${arrow ? caret(8) : nothing}</button>
    ${launcher
      ? html`<button class="launch" aria-label="更多">
          <svg width="6" height="6" viewBox="0 0 6 6"><path d="M0 0l4 4M5 1v4H1" stroke="#eee" fill="none" stroke-width="1.400" /></svg>
        </button>`
      : nothing}
  </div>
</section>`;

@customElement("app-root")
export class AppRoot extends LitElement {
  static styles = [
    base,
    css`
      :host {
        box-sizing: border-box;
        display: grid;
        grid-template-columns: 5px minmax(0, 1fr);
        height: 100vh;
        min-height: 600px;
        padding-top: 3px;
        overflow: hidden;
        position: relative;
        background: #03172f;
        font: 12px/16px "Noto Sans", "Noto Sans CJK SC", sans-serif;
        color: #eee;
      }
      .desktop {
        display: flex;
        flex-direction: column;
        gap: 85px;
        padding-top: 560px;
        overflow: hidden;
        text-indent: -3px;
        border-right: 1px solid #2b3340;
      }
      .desktop span:last-child {
        text-indent: 1px;
      }
      .window {
        display: grid;
        grid-template-rows: auto auto minmax(0, 1fr);
        background: #5d5d5d;
        min-width: 0;
        min-height: 0;
      }

      /* header */
      .header {
        display: grid;
        grid-template-columns: 41px minmax(0, 1fr);
        grid-template-rows: 31px 21px;
        background: linear-gradient(#fff 31px, #2a2a2a 31px, #2a2a2a 32px, #535353 32px, #535353 51px, #2a2a2a 51px);
      }
      .app {
        grid-row: span 2;
        margin: 7px 0 4px;
        border: 1px solid #111;
        background: linear-gradient(#b9b9b9, #8a8a8a 50%, #6c6c6c);
        display: flex;
        align-items: center;
        justify-content: center;
        gap: 3px;
        color: #2e2e36;
      }
      .titlebar {
        display: flex;
        align-items: stretch;
        padding-top: 7px;
      }
      .qat,
      .info {
        display: flex;
        align-items: center;
        background: linear-gradient(#a2a2a2, #777 50%, #4f4f4f);
        border: 1px solid #666;
        border-bottom: 0;
      }
      .qat {
        padding: 0 0 0 4px;
      }
      .qat button {
        width: 24px;
        height: 20px;
        display: grid;
        place-items: center;
      }
      .qat .drop {
        width: 11px;
      }
      .qat .more {
        width: 18px;
        align-content: center;
      }
      .title {
        flex: 1;
        display: flex;
        justify-content: center;
        gap: 24px;
        margin: 0;
        color: #111;
        font: inherit;
        white-space: nowrap;
      }
      .info {
        padding-right: 1px;
      }
      .info > button {
        height: 22px;
        display: flex;
        align-items: center;
        justify-content: center;
      }
      .info .fold {
        width: 11px;
      }
      .search {
        width: 180px;
        height: 22px;
        background: #6d6d6d;
        border: 1px solid #3c3c3c;
        padding: 0 3px;
        font-style: italic;
      }
      .search::placeholder {
        color: #c6c6c6;
        opacity: 1;
      }
      .info .tool {
        width: 24px;
      }
      .info .login {
        width: 92px;
        justify-content: space-between;
        padding-left: 1px;
        margin-right: 4px;
      }
      .info .drop {
        width: 9px;
      }
      .rule {
        width: 1px;
        height: 20px;
        margin: 0 6px;
        background: #8c8c8c;
      }
      .winbtns {
        display: flex;
        margin: -7px 0 0 25px;
      }
      .winbtns button {
        width: 46px;
        display: grid;
        place-items: center;
      }
      .tabs {
        display: flex;
        align-items: flex-end;
        padding-left: 5px;
        color: #d2d2d2;
      }
      .tab {
        height: 18px;
        padding: 0 10px;
        line-height: 17px;
        white-space: nowrap;
      }
      .tab.on {
        background: #5d5d5d;
        color: #fff;
        border: 1px solid #2a2a2a;
        border-bottom: 0;
        padding: 0 8px;
        margin-right: 1px;
      }
      .mini {
        display: flex;
        align-items: center;
        gap: 6px;
        height: 18px;
        margin-left: 21px;
      }

      /* ribbon */
      .ribbon {
        display: flex;
        height: 101px;
        padding: 1px 0 0 1px;
        background: linear-gradient(#565656, #383838 96px, #222 96px, #222 98px, #8a8a8a 98px, #5d5d5d 99px);
      }
      .panel {
        display: flex;
        flex-direction: column;
        height: 96px;
        flex: none;
        border-left: 1px solid #6c6c6c;
        border-right: 1px solid #333;
        background: #5b5b5b;
      }
      .body {
        height: 78px;
        display: flex;
        padding-top: 4px;
      }
      .foot {
        flex: 1;
        display: flex;
        background: linear-gradient(#494949, #414141);
        border-bottom: 1px solid #6a6a6a;
      }
      .foot-title {
        flex: 1;
        display: flex;
        align-items: center;
        justify-content: center;
        gap: 7px;
        padding-top: 1px;
      }
      .launch {
        width: 14px;
        display: grid;
        place-items: center;
      }
      .big {
        width: 40px;
        flex: none;
        display: flex;
        flex-direction: column;
        align-items: center;
        padding-top: 2px;
        white-space: nowrap;
      }
      .big-label {
        display: grid;
        line-height: 17px;
        margin-top: 3px;
      }
      .big .caret {
        margin-top: 3px;
      }
      .col {
        display: grid;
        flex: none;
        grid-auto-rows: 24px;
        align-content: start;
      }
      .small {
        display: flex;
        align-items: center;
        gap: 5px;
        height: 24px;
        white-space: nowrap;
      }
      .gap {
        width: 1px;
      }
      .draw {
        width: 210px;
      }
      .draw .col {
        margin-left: 10px;
      }
      .draw .gap {
        display: none;
      }
      .modify {
        width: 227px;
      }
      .modify .body {
        padding-left: 5px;
      }
      .modify .text {
        width: 59px;
      }
      .modify .wide {
        width: 75px;
      }
      .note {
        width: 156px;
      }
      .note .body {
        padding-left: 3px;
      }
      .note .big {
        width: 42px;
      }
      .note .col {
        margin-left: 3px;
      }
      .layers {
        width: 252px;
      }
      .stack {
        flex: 1;
        min-width: 0;
        display: grid;
        grid-auto-rows: 24px;
        align-content: start;
      }
      .row {
        display: flex;
        gap: 8px;
        height: 24px;
        padding-left: 4px;
      }
      .combo {
        display: flex;
        align-items: center;
        height: 22px;
        margin: 1px 1px;
        border: 1px solid #2c2c2c;
        background: linear-gradient(#6a6a6a, #4e4e4e);
      }
      .combo select {
        flex: 1;
        min-width: 0;
        height: 20px;
      }
      .combo .caret {
        margin: 0 2px;
      }
      .layers .combo {
        gap: 5px;
        padding-left: 3px;
      }
      .swatch {
        width: 14px;
        height: 14px;
        background: #fff;
        outline: 1px solid #222;
      }
      .block {
        width: 134px;
      }
      .block .col {
        margin-left: 4px;
      }
      .props {
        width: 245px;
      }
      .props .col {
        width: 18px;
      }
      .props .swatch {
        margin: 0 12px 0 13px;
        outline-color: #bbb;
      }
      .sample {
        width: 59px;
        height: 1px;
        margin: 0 2px 0 8px;
        background: #fff;
      }
      .group {
        width: 68px;
      }
      .group .small {
        width: 24px;
        justify-content: center;
      }
      .group .small.on {
        height: 22px;
        margin-top: 1px;
        background: #5579b4;
        border: 1px solid #22375c;
      }
      .util,
      .clip {
        width: 76px;
      }
      .util .big,
      .clip .big {
        width: 50px;
      }
      .view {
        width: 61px;
      }
      .view .body {
        justify-content: center;
      }

      /* workspace */
      .work {
        display: grid;
        grid-template-columns: 76px 6px 196px 2px minmax(0, 1fr);
        min-height: 0;
      }
      .pal-title {
        display: flex;
        align-items: center;
        gap: 5px;
        height: 22px;
        margin-top: 2px;
        padding-left: 5px;
        background: #4f4f4f;
        border-radius: 4px 4px 0 0;
        white-space: nowrap;
      }
      .dots {
        width: 4px;
        height: 10px;
        background: radial-gradient(circle, #222 1px, transparent 1px) 0 0 / 2px 3px;
      }
      .pal {
        display: flex;
        flex-direction: column;
        min-width: 0;
      }
      .pal-body {
        flex: 1;
        background: #f0f0f0;
      }
      .tree {
        list-style: none;
        margin: 5px 0 0;
        padding: 2px 0 0;
        color: #111;
        overflow: hidden;
      }
      .tree button {
        display: flex;
        align-items: center;
        gap: 15px;
        height: 18px;
        padding-left: 8px;
        white-space: pre;
      }
      .manage .pal-title {
        margin-left: -3px;
      }
      .pick {
        height: 20px;
        margin: 12px 0 4px;
        padding: 0 3px;
        background: #e1e1e1;
        border: 1px solid #f4f4f4;
        color: #111;
      }
      .sections {
        display: grid;
        gap: 2px;
      }
      .sections button {
        height: 21px;
        padding: 2px 9px 0;
        text-align: left;
        color: #f6f6f6;
        background: linear-gradient(135deg, #f0f0f0 5px, #bcbcbc 5px);
      }

      /* viewports */
      .canvas {
        display: grid;
        grid-template-columns: minmax(0, 1fr) 5px minmax(0, 1fr);
        grid-template-rows: minmax(0, 421fr) 5px minmax(0, 367fr);
        background: #000;
        min-height: 0;
      }
      .vp {
        position: relative;
        overflow: hidden;
        min-height: 0;
      }
      .vp.active {
        margin: 1px;
        border: 3px solid #04498f;
        outline: 1px solid #03203f;
      }
      .vp-label {
        line-height: 14px;
        color: #c9c9c9;
      }
      .cube {
        position: absolute;
        right: 8px;
        top: 31px;
      }
      .active .cube {
        right: 4px;
        top: 3px;
      }
      .low .cube {
        top: 7px;
      }
      .bar {
        display: flex;
        align-items: center;
        justify-content: center;
        background: linear-gradient(#484848, #333);
        position: relative;
      }
      .bar.under {
        padding-top: 54px;
      }
      .grip {
        width: 13px;
        height: 3px;
        border: solid #858585;
        border-width: 1px 0;
      }
      .bar.v .grip {
        width: 3px;
        height: 13px;
        border-width: 0 1px;
      }
      .plus {
        position: absolute;
        left: 7px;
        top: 0;
      }
      .plus.end {
        left: auto;
        right: 7px;
      }
      .plus.top {
        left: 0;
        top: 8px;
      }
      .docbtns {
        position: absolute;
        top: 9px;
        right: 10px;
        display: flex;
        gap: 8px;
      }
      .nav {
        position: absolute;
        right: 0;
        top: 140px;
        width: 32px;
        height: 212px;
        border-radius: 4px;
        background: #3f3f3f;
        border: 1px solid #4a4a4a;
      }
      .mark {
        position: absolute;
        right: 24px;
        top: 271px;
        display: flex;
        gap: 4px;
      }
      .mark-text {
        display: grid;
        align-content: start;
        width: 144px;
        white-space: nowrap;
      }
      .mark-cn {
        font: 900 47px/48px "Noto Sans CJK SC", sans-serif;
        margin-top: 11px;
        color: #000;
        -webkit-text-stroke: 2px #7c7c7c;
      }
      .mark-en {
        font: 600 30px/20px "Noto Sans", "Open Sans", sans-serif;
        color: #5d5d5d;
        -webkit-text-stroke: 1px #7d7d7d;
      }
      .ucs {
        position: absolute;
        left: 1px;
        bottom: 0;
      }

      .strip {
        position: absolute;
      }
      .one {
        left: 182px;
        top: 170px;
      }
      .two {
        left: 195px;
        top: 200px;
      }
      .four {
        left: 218px;
        top: 244px;
      }
      .three {
        left: 158px;
        top: 222px;
      }
      .five {
        left: 169px;
        top: 268px;
      }
    `,
  ];

  private header() {
    return html`<header class="header">
      <button class="app" aria-label="应用程序菜单">
        <svg width="24" height="28" viewBox="0 0 24 28">
          <path d="M12 1L7 12 1 24c2 2 5 1 7-1l4-12 5 13c2 2 5 2 6 0L12 1z" fill="#c01c22" />
          <path d="M12 1l11 23c-1 2-4 2-6 0l-5-13z" fill="#8f1218" />
          <path d="M4 18c5-2 13-2 16 0v4c-4-3-12-3-16-1z" fill="#a8161c" />
          <path d="M12 1L6 15l6 2 5-4z" fill="#d9292e" />
        </svg>
        ${caret(8)}
      </button>
      <div class="titlebar">
        <div class="qat">
          ${["new", "open", "save", "saveas", "print", "undo"].map((n) => html`<button aria-label=${n}>${icon(n)}</button>`)}
          <button class="drop" aria-label="放弃列表">${caret()}</button>
          <button aria-label="redo">${icon("redo")}</button>
          <button class="drop" aria-label="重做列表">${caret()}</button>
          <button class="more" aria-label="自定义">
            <svg width="8" height="7" viewBox="0 0 8 7"><path d="M0 .5h8M0 3h8L4 7z" fill="#f4f4f4" stroke="#f4f4f4" stroke-width=".8" /></svg>
          </button>
        </div>
        <h1 class="title"><span>Autodesk AutoCAD 2016 - 未注册版</span><span>Drawing1.dwg</span></h1>
        <div class="info">
          <button class="fold" aria-label="收拢"><svg width="4" height="7" viewBox="0 0 4 7"><path d="M0 0l4 3.500L0 7z" fill="#eee" /></svg></button>
          <input class="search" type="text" placeholder="键入关键字或短语" aria-label="搜索" />
          <button class="tool" aria-label="搜索">${icon("find")}</button>
          <button class="tool" aria-label="用户">${icon("user")}</button>
          <button class="login"><span>登录</span>${caret()}</button>
          <button class="tool" aria-label="Exchange">${icon("exchange")}</button>
          <button class="tool" aria-label="A360">${icon("a360")}</button>
          <button class="drop" aria-label="A360 菜单">${caret()}</button>
          <span class="rule"></span>
          <button class="tool" aria-label="帮助">${icon("help")}</button>
          <button class="drop" aria-label="帮助菜单">${caret()}</button>
        </div>
        <div class="winbtns">
          <button aria-label="最小化"><svg width="10" height="10"><path d="M0 5.500h10" stroke="#888" /></svg></button>
          <button aria-label="最大化"><svg width="10" height="10"><path d="M.5.5h9v9h-9z" stroke="#888" fill="none" /></svg></button>
          <button aria-label="关闭"><svg width="11" height="11"><path d="M0 0l11 11M11 0L0 11" stroke="#888" /></svg></button>
        </div>
      </div>
      <nav class="tabs">
        ${tabs.map((t, i) => html`<button class="tab ${i ? "" : "on"}">${t}</button>`)}
        <button class="mini" aria-label="最小化功能区">
          <svg width="14" height="8" viewBox="0 0 14 8"><rect width="14" height="8" rx="2" fill="#eee" /><path d="M4 5.500h6L7 2.500z" fill="#333" /></svg>${caret()}
        </button>
      </nav>
    </header>`;
  }

  private ribbon() {
    return html`<div class="ribbon">
      ${panel("draw", "绘图", html`${big("line", "直线")}${big("pline", "多段线")}${big("circle", "圆", true)}${big("arc", "圆弧", true)}
        <div class="col">${small("rect", "", true)}${small("ellipse", "", true)}${small("hatch", "", true)}</div>`)}
      ${panel("modify", "修改", html`
        <div class="col text">${small("move", "移动")}${small("copy", "复制")}${small("stretch", "拉伸")}</div>
        <div class="col text">${small("rotate", "旋转")}${small("mirror", "镜像")}${small("scale", "缩放")}</div>
        <div class="col wide">${small("trim", "修剪", true)}${small("fillet", "圆角", true)}${small("array", "阵列", true)}</div>
        <div class="col">${small("erase")}${small("explode")}${small("offset")}</div>`)}
      ${panel("note", "注释", html`${big("bigA", "文字", true)}${big("dim", "标注")}
        <div class="col">${small("linear", "线性", true)}${small("leader", "引线", true)}${small("table", "表格")}</div>`)}
      ${panel("layers", "图层", html`${big("layerprop", ["图层", "特性"])}
        <div class="stack">
          <div class="combo">
            ${icon("bulb")}${icon("sun")}${icon("unlock")}<span class="swatch"></span>
            <select aria-label="图层"><option>0</option></select>${caret(8)}
          </div>
          <div class="row">${["l1", "l2", "l3", "l4"].map((n) => small(n))}${small("l5", "置为当前")}</div>
          <div class="row">${["l6", "l7", "l8", "l9"].map((n) => small(n))}${small("l10", "匹配图层")}</div>
        </div>`)}
      ${panel("block", "块", html`${big("insert", "插入", true)}
        <div class="col">${small("create", "创建")}${small("edit", "编辑")}${small("attr", "编辑属性", true)}</div>`)}
      ${panel("props", "特性", html`${big("match", ["特性", "匹配"])}
        <div class="col">${small("wheel")}${small("weight")}${small("ltype")}</div>
        <div class="stack">
          <div class="combo"><span class="swatch"></span><select aria-label="颜色"><option>ByLayer</option></select>${caret(8)}</div>
          ${["线宽", "线型"].map((l) => html`<div class="combo"><span class="sample"></span><select aria-label=${l}><option>ByLayer</option></select>${caret(8)}</div>`)}
        </div>`, true, true)}
      ${panel("group", "组", html`${big("group", "组")}
        <div class="col">${small("ungroup")}${small("groupedit")}<button class="small on" aria-label="组选择">${icon("groupsel")}</button></div>`)}
      ${panel("util", "实用工具", html`${big("measure", "测量", true)}<div class="col">${small("quick")}${small("point")}${small("calc")}</div>`)}
      ${panel("clip", "剪贴板", html`${big("paste", "粘贴", true)}<div class="col">${small("cut")}${small("copyclip")}</div>`, false)}
      ${panel("view", "视图", html`${big("base", "基点", true)}`, true, true)}
    </div>`;
  }

  private viewports() {
    const plus = (cls: string) =>
      html`<svg class="plus ${cls}" width="5" height="5" viewBox="0 0 5 5"><path d="M0 2.500h5M2.500 0v5" stroke="#999" /></svg>`;
    return html`<main class="canvas">
      <section class="vp active">
        <div class="vp-label">[+][俯视][二维线框]</div>
        <view-cube class="cube" active></view-cube>
        <div class="mark">
          <svg width="72" height="82" viewBox="0 0 72 82">
            <path d="M15 17C24-2 48-2 57 17h-5C45 4 27 4 20 17z" fill="#626262" stroke="#8a8a8a" />
            <rect x=".5" y="15.500" width="71" height="66" rx="10" fill="#5f5f5f" stroke="#7c7c7c" />
            <path d="M20 33q8 0 16-3 8 3 16 3v16q0 10-16 18Q20 59 20 49z" fill="#6b6b6b" stroke="#767676" />
            <text x="36" y="55" text-anchor="middle" font-size="19" font-weight="700" fill="#525252" font-family="Noto Sans CJK SC">安</text>
          </svg>
          <div class="mark-text"><span class="mark-cn">安下载</span><span class="mark-en">anxz.com</span></div>
        </div>
        <div class="nav" role="toolbar" aria-label="导航栏">
          <svg width="30" height="210" viewBox="0 0 30 210" fill="none" stroke="#262626" stroke-width="1.400">
            <circle cx="25" cy="4.500" r="3.500" fill="#262626" /><path d="M23.500 3l3 3M26.500 3l-3 3" stroke="#555" />
            <path d="M26 19v10a11 11 0 1 1-11-11h11z" /><circle cx="15" cy="29" r="6" /><path d="M8 39l4-5M22 39l-4-5" />
            <path d="M13 49h5l-2.500 3z" fill="#262626" stroke="none" /><path d="M2 56h26" stroke="#555" />
            <path d="M10 82c-2-5-5-7-6-10 2-2 4 1 6 3L8 64c2-2 3 1 4 6l1-9c2-2 3 0 3 1v8l3-8c2-1 3 1 2 2l-1 8 3-5c2-1 3 1 2 3-2 5-2 9-5 12z" />
            <path d="M5 90l13 13M18 90L5 103M4 94v-5h5M14 89h5v5M4 99v5h5" /><circle cx="20" cy="104" r="5" /><path d="M23 108l5 4" stroke-width="3" />
            <path d="M13 119h5l-2.500 3z" fill="#262626" stroke="none" />
            <path d="M15 127l4 5h-2v16h-4v-16h-2z" /><path d="M12 135c-11 2-11 7 0 8h8c8-2 8-6 0-8M8 139l-3 4 4 3" />
            <path d="M13 157h5l-2.500 3z" fill="#262626" stroke="none" /><path d="M2 164h26" stroke="#555" />
            <path d="M4 169h6v6H4zM12 169h6v6h-6zM20 169h6v6h-6zM4 178h16v13H4z" /><path d="M9 181v7l6-3.500z" fill="#262626" />
            <circle cx="25" cy="205" r="3.500" fill="#262626" /><path d="M23 205h4" stroke="#555" />
          </svg>
        </div>
        <svg class="ucs" width="84" height="84" viewBox="0 0 84 84" fill="none" stroke="#f2f2f2">
          <path d="M7.500 24v50.500H58M3.500 70.500h8v8h-8z" />
          <text x="15" y="20" text-anchor="middle" font-size="18" font-weight="300" fill="#f2f2f2" stroke="none" font-family="Lato">Y</text>
          <text x="68" y="74" text-anchor="middle" font-size="18" font-weight="300" fill="#f2f2f2" stroke="none" font-family="Lato">X</text>
        </svg>
      </section>
      <div class="bar v">${plus("top")}<span class="grip"></span></div>
      <section class="vp">
        <div class="docbtns">
          <svg width="12" height="12"><path d="M1 9h10" stroke="#f2f2f2" stroke-width="3" /></svg>
          <svg width="12" height="12"><path d="M4 1.500h7v7M2.500 4.500h6v6h-6z" fill="none" stroke="#f2f2f2" stroke-width="2" /></svg>
          <svg width="12" height="12"><path d="M2 2l8 8M10 2l-8 8" stroke="#f2f2f2" stroke-width="2.500" /></svg>
        </div>
        <view-cube class="cube"></view-cube>
      </section>
      <div class="bar">${plus("")}<span class="grip"></span></div>
      <div class="bar"></div>
      <div class="bar"><span class="grip"></span>${plus("end")}</div>
      <section class="vp low"><view-cube class="cube" face="前" side></view-cube></section>
      <div class="bar v under"><span class="grip"></span></div>
      <section class="vp low"><view-cube class="cube" face="右" side></view-cube></section>
    </main>`;
  }

  render() {
    return html`
      <div class="desktop"><span>3</span><span>3</span><span>T</span></div>
      <div class="window">
        ${this.header()}${this.ribbon()}
        <div class="work">
          <aside class="pal">
            <div class="pal-title"><span class="dots"></span>T...</div>
            <ul class="tree pal-body">
              ${tree.map(
                (t) => html`<li>
                  <button><svg width="5" height="10" viewBox="0 0 5 10"><path d="M0 0l5 5-5 5z" fill="#2f659f" /></svg>${t}</button>
                </li>`
              )}
            </ul>
          </aside>
          <span></span>
          <aside class="pal manage">
            <div class="pal-title"><span class="dots"></span>工程管理</div>
            <select class="pick" aria-label="工程"><option>工程管理</option></select>
            <div class="pal-body">
              <div class="sections"><button>图纸</button><button>楼层</button><button>属性</button></div>
            </div>
          </aside>
          <span></span>
          ${this.viewports()}
        </div>
      </div>
      ${(["one", "two", "four", "three", "five"] as const).map(
        (k) => html`<tool-strip class="strip ${k}" label="工具" .items=${strips[k].split(" ")}></tool-strip>`
      )}
    `;
  }
}
